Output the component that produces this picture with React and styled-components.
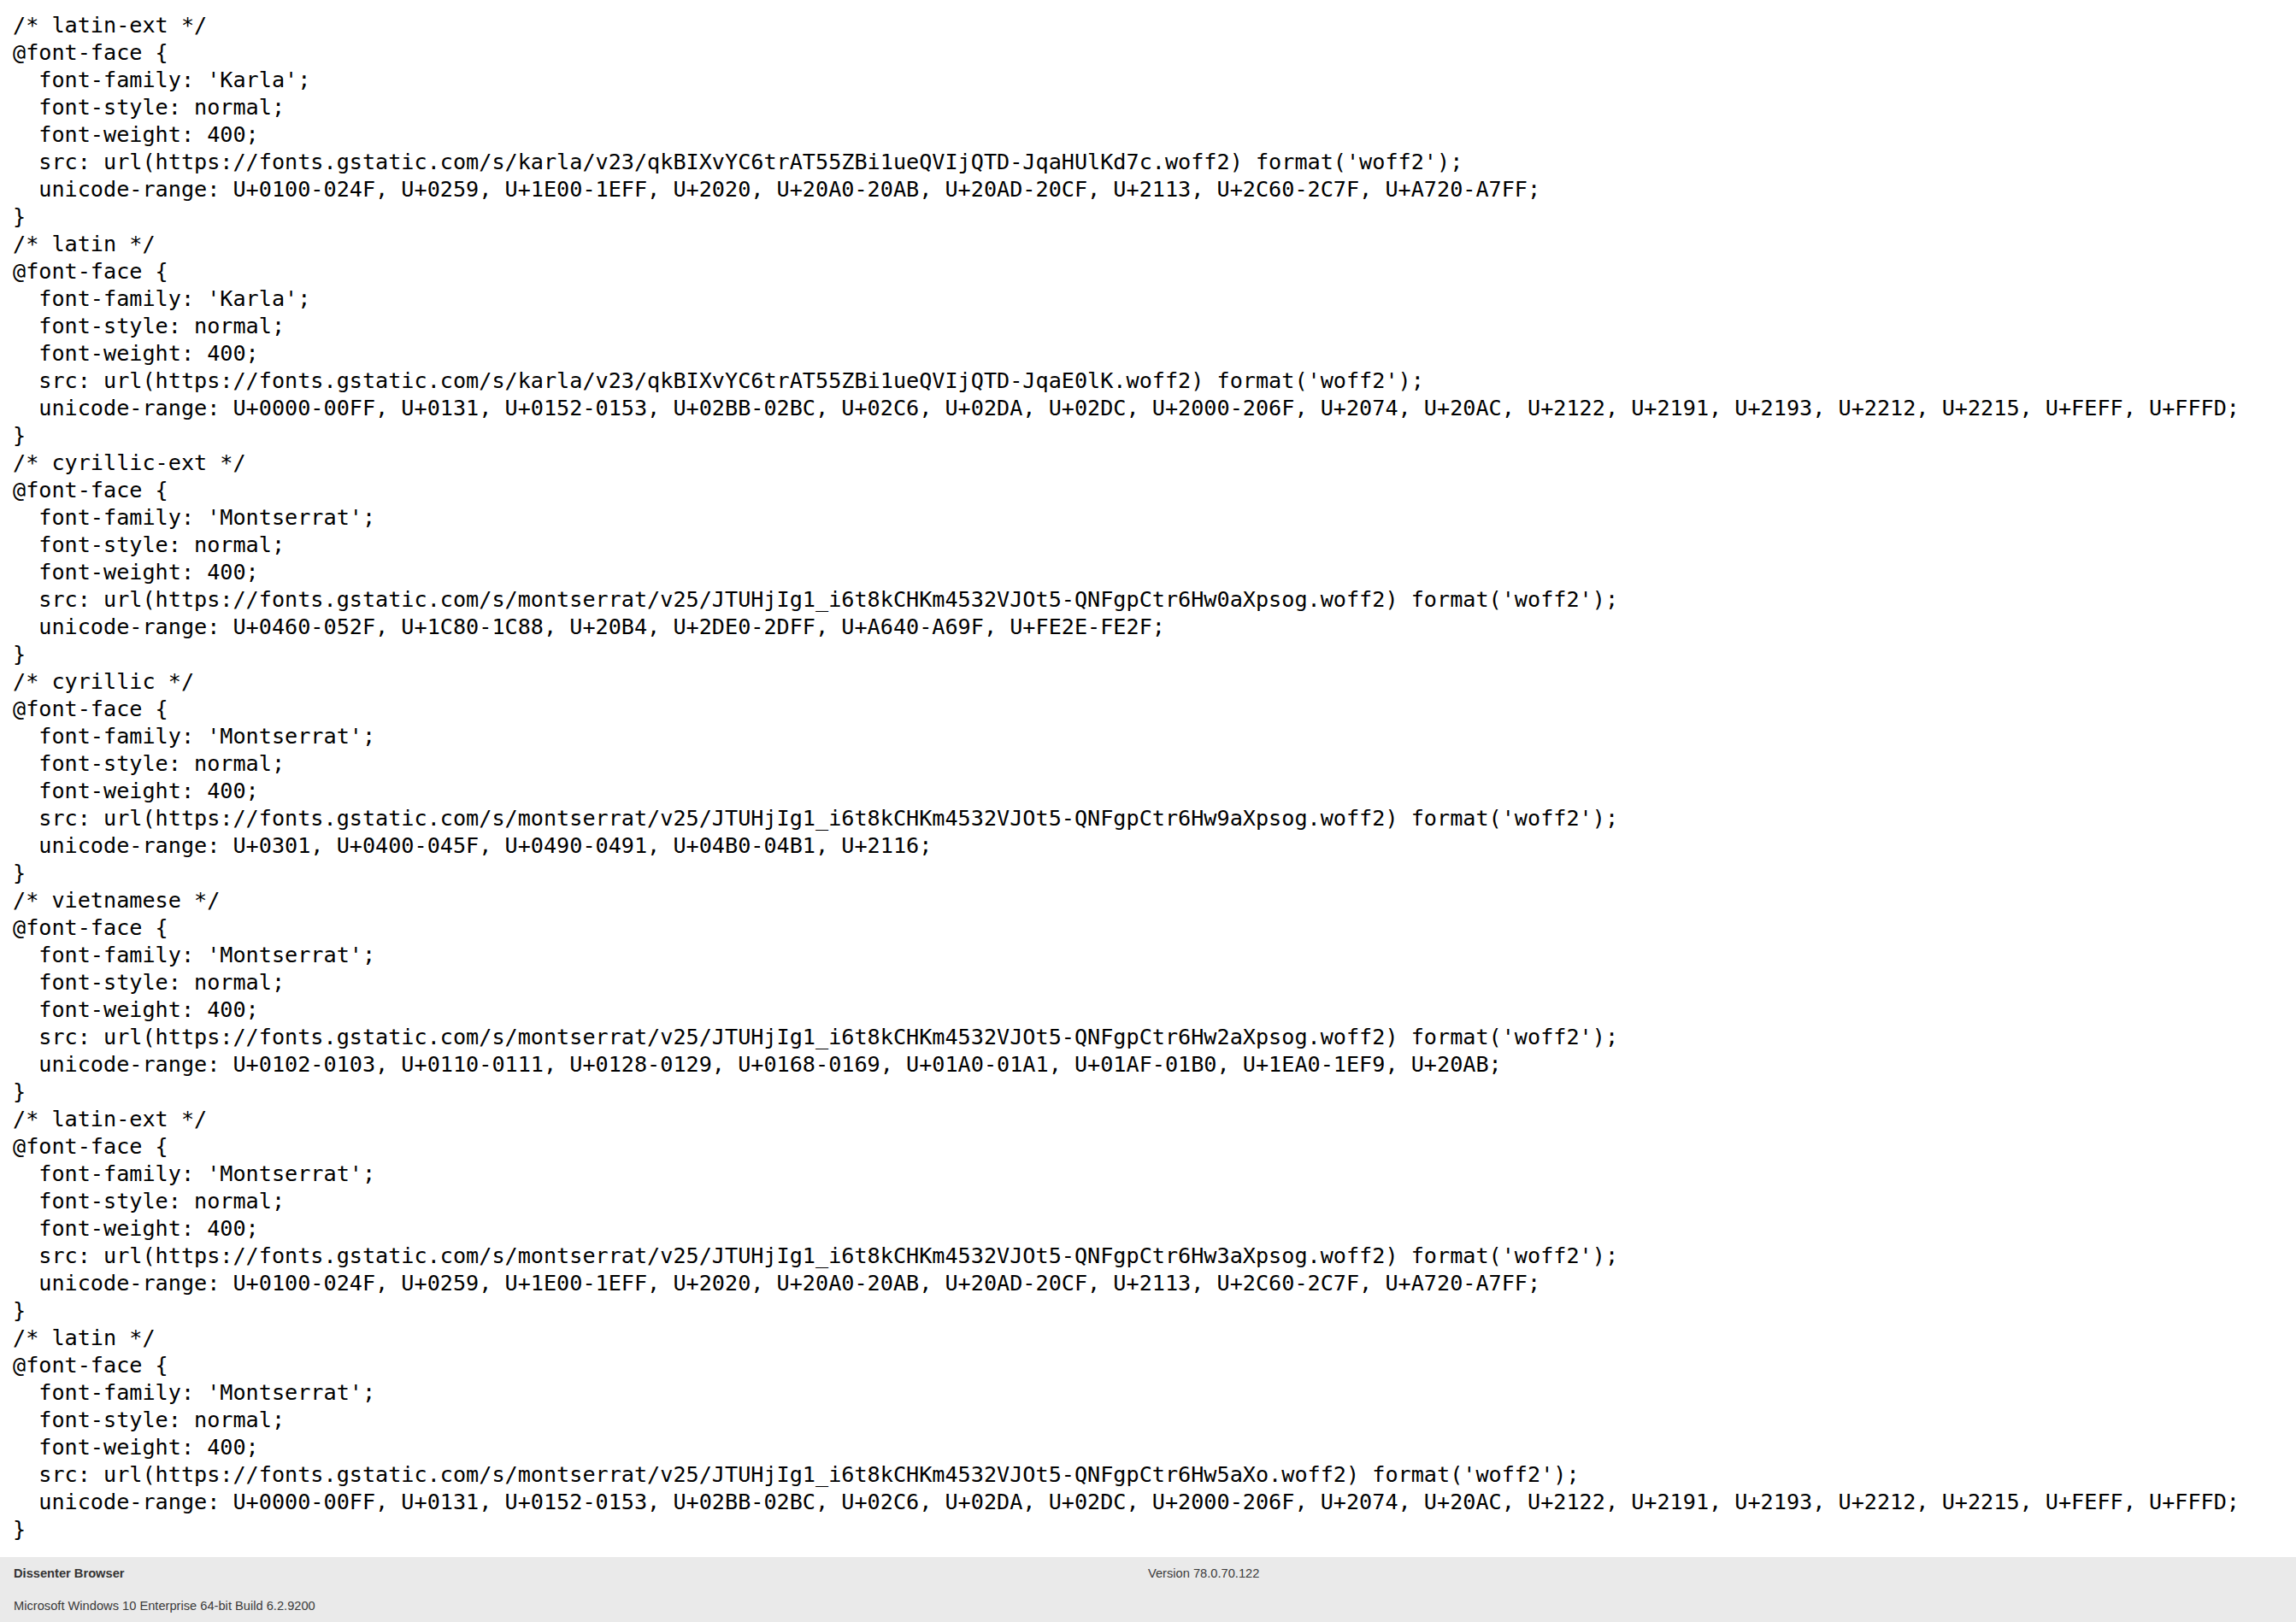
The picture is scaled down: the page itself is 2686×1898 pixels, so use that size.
import React from "react";
import styled, { createGlobalStyle } from "styled-components";

const GlobalStyle = createGlobalStyle`
  html, body {
    margin: 0;
    padding: 0;
    background: #ffffff;
  }
  body {
    font-family: "Liberation Sans", Arial, sans-serif;
  }
`;

const Page = styled.div`
  display: flex;
  flex-direction: column;
  min-height: 100vh;
`;

const CodeView = styled.pre`
  margin: 13.5px 0 16.5px 0;
  padding: 0 15px;
  font-family: "DejaVu Sans Mono", "Liberation Mono", monospace;
  font-size: 25.16px;
  line-height: 32px;
  color: #000000;
  white-space: pre;
  flex: 1 0 auto;
`;

const Footer = styled.footer`
  display: grid;
  grid-template-columns: 1fr 1fr;
  row-gap: 22px;
  padding: 10.5px 16px 10px 16px;
  background: #eaeaea;
  color: #3a3a3a;
  font-family: "Liberation Sans", Arial, sans-serif;
  font-size: 14.67px;
  line-height: 16.9px;
`;

const FooterCell = styled.div`
  font-weight: ${(p) => (p.$bold ? 700 : 400)};
  color: ${(p) => (p.$bold ? "#333333" : "#3a3a3a")};
  white-space: nowrap;
`;

const karlaBase = "https://fonts.gstatic.com/s/karla/v23/qkBIXvYC6trAT55ZBi1ueQVIjQTD-Jqa";
const montBase =
  "https://fonts.gstatic.com/s/montserrat/v25/JTUHjIg1_i6t8kCHKm4532VJOt5-QNFgpCtr6Hw";

const latinExtRange =
  "U+0100-024F, U+0259, U+1E00-1EFF, U+2020, U+20A0-20AB, U+20AD-20CF, U+2113, U+2C60-2C7F, U+A720-A7FF";
const latinRange =
  "U+0000-00FF, U+0131, U+0152-0153, U+02BB-02BC, U+02C6, U+02DA, U+02DC, U+2000-206F, U+2074, U+20AC, U+2122, U+2191, U+2193, U+2212, U+2215, U+FEFF, U+FFFD";

const blocks = [
  { subset: "latin-ext", family: "Karla", url: karlaBase + "HUlKd7c.woff2", range: latinExtRange },
  { subset: "latin", family: "Karla", url: karlaBase + "E0lK.woff2", range: latinRange },
  {
    subset: "cyrillic-ext",
    family: "Montserrat",
    url: montBase + "0aXpsog.woff2",
    range: "U+0460-052F, U+1C80-1C88, U+20B4, U+2DE0-2DFF, U+A640-A69F, U+FE2E-FE2F",
  },
  {
    subset: "cyrillic",
    family: "Montserrat",
    url: montBase + "9aXpsog.woff2",
    range: "U+0301, U+0400-045F, U+0490-0491, U+04B0-04B1, U+2116",
  },
  {
    subset: "vietnamese",
    family: "Montserrat",
    url: montBase + "2aXpsog.woff2",
    range:
      "U+0102-0103, U+0110-0111, U+0128-0129, U+0168-0169, U+01A0-01A1, U+01AF-01B0, U+1EA0-1EF9, U+20AB",
  },
  { subset: "latin-ext", family: "Montserrat", url: montBase + "3aXpsog.woff2", range: latinExtRange },
  { subset: "latin", family: "Montserrat", url: montBase + "5aXo.woff2", range: latinRange },
];

const text = blocks
  .map((b) =>
    [
      `/* ${b.subset} */`,
      `@font-face {`,
      `  font-family: '${b.family}';`,
      `  font-style: normal;`,
      `  font-weight: 400;`,
      `  src: url(${b.url}) format('woff2');`,
      `  unicode-range: ${b.range};`,
      `}`,
    ].join("\n")
  )
  .join("\n");

export default function App() {
  return (
    <Page>
      <GlobalStyle />
      <CodeView>{text}</CodeView>
      <Footer>
        <FooterCell $bold>Dissenter Browser</FooterCell>
        <FooterCell>Version 78.0.70.122</FooterCell>
        <FooterCell>Microsoft Windows 10 Enterprise 64-bit Build 6.2.9200</FooterCell>
        <FooterCell />
      </Footer>
    </Page>
  );
}
